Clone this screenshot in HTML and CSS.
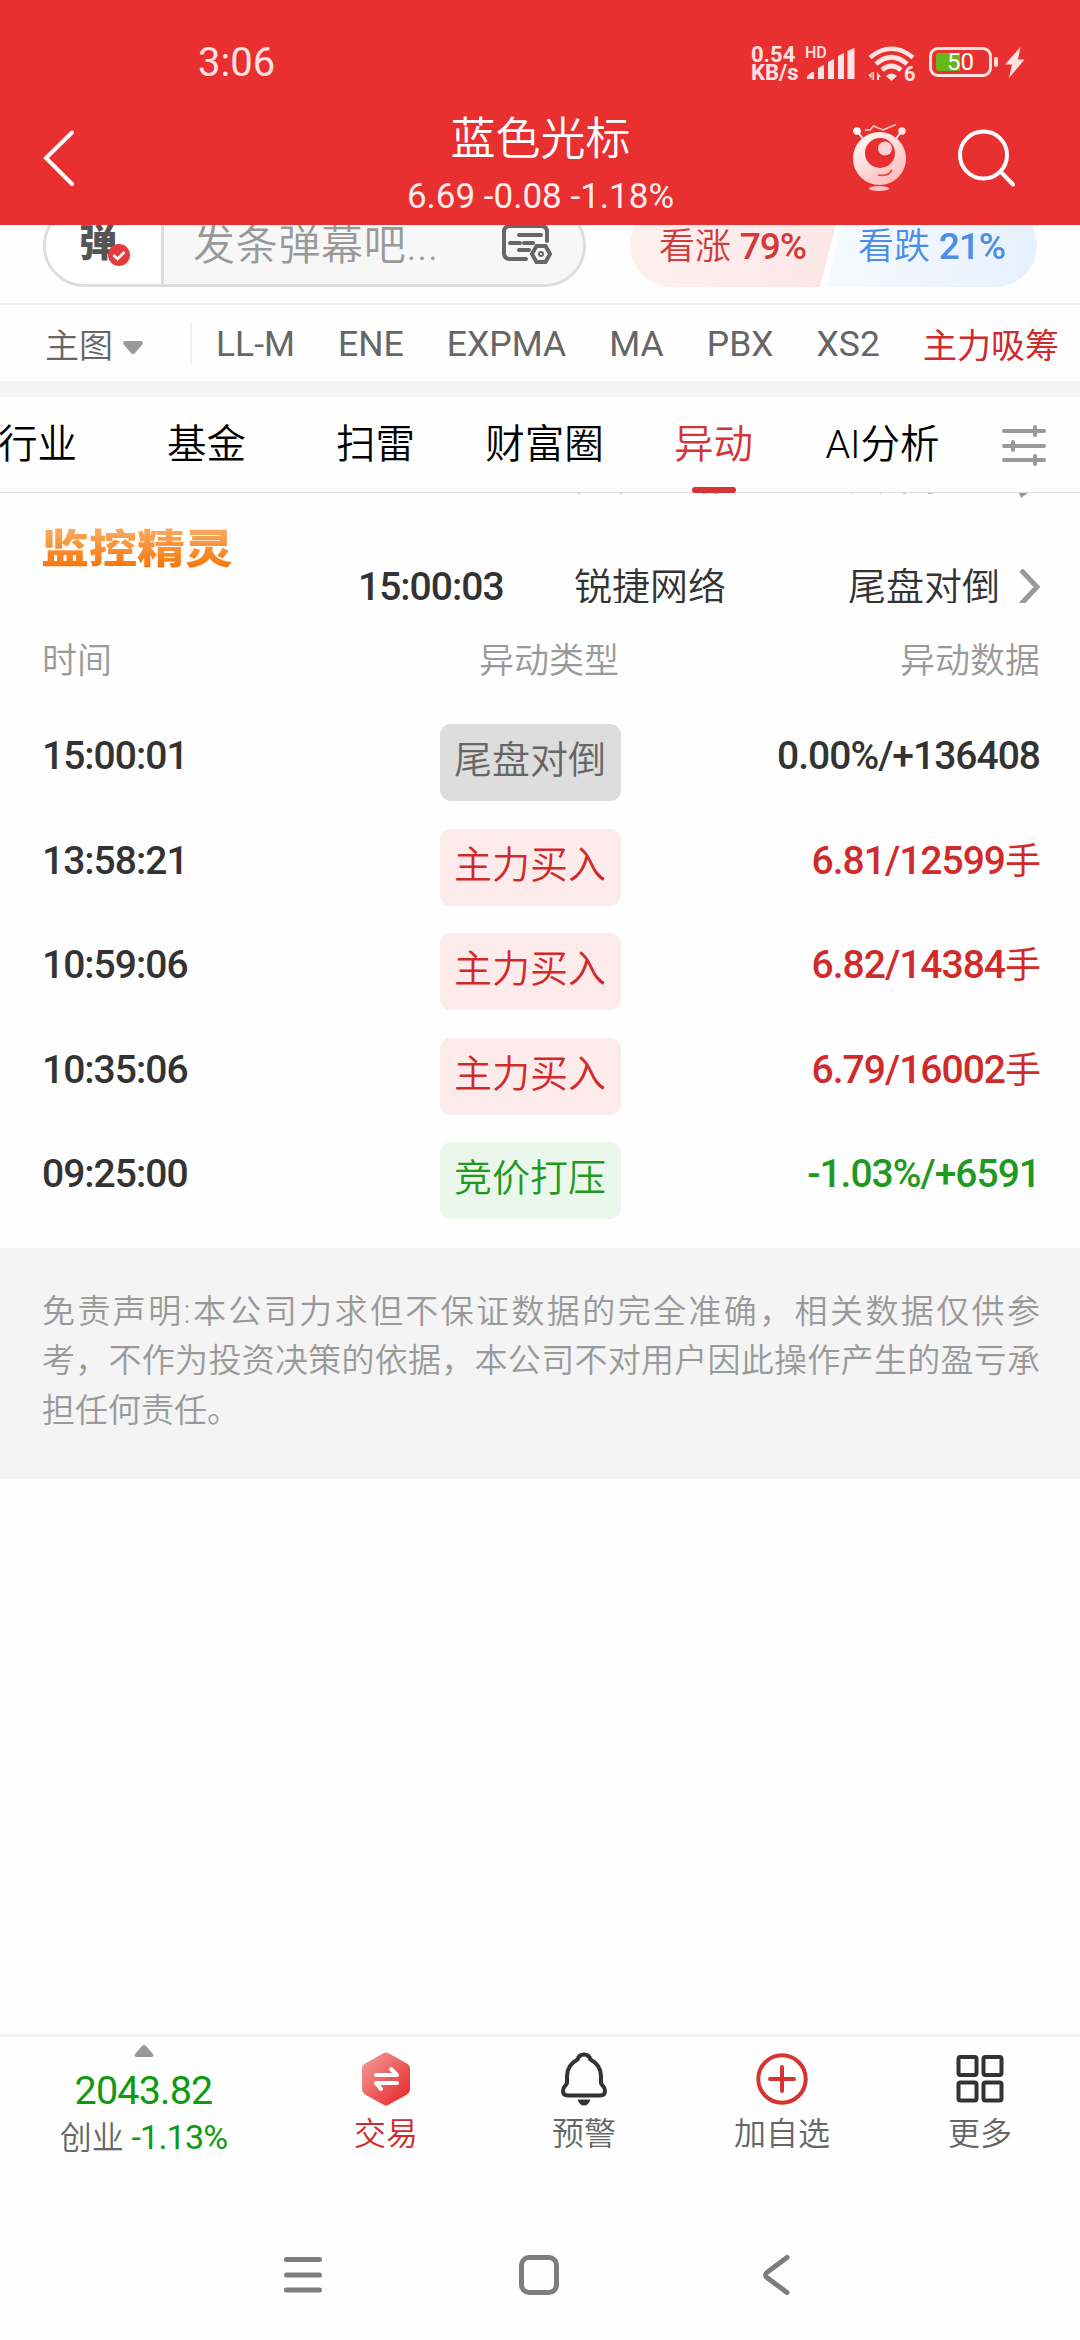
FILE: index.html
```html
<!DOCTYPE html>
<html lang="zh-CN">
<head>
    <meta charset="UTF-8">
    <meta name="viewport" content="width=device-width, initial-scale=1.0">
    <title>蓝色光标 - 异动</title>
    <link rel="stylesheet" href="styles.css">
</head>
<body>

    <header>
        <div class="status">
            <span class="clock">3:06</span>
            <div class="status-right">
                <div class="speed"><span>0.54</span><span>KB/s</span></div>
                <span class="hd">HD</span>
                <svg class="signal" width="48" height="32" viewBox="0 0 48 32">
                    <path d="M0 31v-3l5-4h2v7zM11 31V20l6-3v14zM21 31V14l6-3v20zM31 31V8l6-3v26zM40.500 31V3l7-3v31z"/>
                </svg>
                <svg class="wifi" width="48" height="36" viewBox="0 0 48 36">
                    <g fill="none" stroke="#ffe3e3" stroke-width="4.600">
                        <path d="M2 11.500Q23.500-6 45 11.500M8 18Q23.500 4.500 39 18M14 24Q23.500 16 33 24"/>
                    </g>
                    <path d="M18 30q5.500-5 11 0l-5.500 5zM4.500 26v8l-4-5zM6 34v-8h-2.500v8zM9 34v-8l4 5h-2v3z"/>
                    <text x="36" y="35">6</text>
                </svg>
                <div class="battery">
                    <div class="level"></div>
                    <span>50</span>
                </div>
                <svg class="bolt" width="20" height="31" viewBox="0 0 20 31"><path d="M15.500 0L0 17.500h7L4 31 19.500 12.500h-6.500z"/></svg>
            </div>
        </div>
        <div class="bar">
            <svg class="back" width="40" height="60" viewBox="0 0 40 60"><path d="M32 4.500L6 30l26 26"/></svg>
            <div class="stock">
                <h1>蓝色光标</h1>
                <p>6.69 -0.08 -1.18%</p>
            </div>
            <svg class="robot" width="60" height="72" viewBox="850 122 60 72">
                <defs>
                    <linearGradient id="face" x1="0" y1="0" x2=".7" y2="1">
                        <stop offset="0" stop-color="#fff"/>
                        <stop offset="1" stop-color="#ffbcbc"/>
                    </linearGradient>
                </defs>
                <path d="M857 131l7 9M902 131l-7 9" stroke="#ffe9e9" stroke-width="2"/>
                <circle cx="857" cy="131" r="3.800" fill="#fff"/>
                <circle cx="902" cy="131" r="3.800" fill="#ffe2e2"/>
                <path d="M865 130h5l3.500-4 9.500 4 13-5.500" fill="none" stroke="#ffc9c9" stroke-width="1.500"/>
                <circle cx="879.500" cy="158.500" r="26.500" fill="url(#face)"/>
                <circle cx="880" cy="153" r="15" fill="#e72f2f"/>
                <circle cx="885" cy="148.500" r="7" fill="#ffd3d3"/>
                <path d="M878 175q10 2 14-5" fill="none" stroke="#e54848" stroke-width="1.700"/>
                <ellipse cx="879" cy="188.500" rx="10" ry="2.400" fill="#ffc2c2"/>
            </svg>
            <svg class="search" width="60" height="60" viewBox="0 0 60 60"><circle cx="26.500" cy="27" r="23.500"/><path d="M44 44l12 12.500"/></svg>
        </div>
    </header>

    <section class="danmu">
        <div class="danmu-input">
            <div class="danmu-switch">
                弹
                <svg width="22" height="22" viewBox="0 0 22 22"><circle cx="11" cy="11" r="11" fill="#e43c3c"/><path d="M5.500 11l4 4 7-7" fill="none" stroke="#fff" stroke-width="2.600"/></svg>
            </div>
            <span class="placeholder">发条弹幕吧...</span>
            <svg class="setting" width="50" height="42" viewBox="0 0 50 42">
                <path d="M24 35H8q-6 0-6-6V8q0-6 6-6h31q6 0 6 6v9M17 11h22M8 19h10M22 19h9M17 26h10M30 30l4.500-8h9l4.500 8-4.500 8h-9z"/>
                <circle cx="39" cy="30" r="1"/>
            </svg>
        </div>
        <div class="vote">
            <div class="up">看涨 <b>79%</b></div>
            <div class="down">看跌 <b>21%</b></div>
        </div>
    </section>

    <section class="indicators">
        <div class="main-chart">主图<svg width="20" height="13" viewBox="0 0 20 13"><path d="M2 0h16q3 1 1 4l-7 8q-2 2-4 0L1 4Q-1 1 2 0z"/></svg></div>
        <ul>
            <li>LL-M</li>
            <li>ENE</li>
            <li>EXPMA</li>
            <li>MA</li>
            <li>PBX</li>
            <li>XS2</li>
            <li class="red">主力吸筹</li>
        </ul>
    </section>

    <nav class="tabs">
        <a>行业</a>
        <a>基金</a>
        <a>扫雷</a>
        <a>财富圈</a>
        <a class="active">异动</a>
        <a>AI分析</a>
        <svg width="44" height="42" viewBox="0 0 44 42"><path d="M2 7h40M2 22h40M2 36h40M33 3v8M11 18v8M33 32v8"/></svg>
    </nav>

    <section class="monitor">
        <h2>监控精灵</h2>
        <div class="ticker">
            <svg class="ticker-prev" width="470" height="6" viewBox="0 0 470 6">
                <path d="M8 0h2M50 0h2M132 0h5M144 0h5M281 0h1M310 0h1M333 0h3M358 0h5" stroke="#e99" stroke-width="1.500"/>
                <path d="M449 0h9l-7 5z" fill="#999"/>
            </svg>
            <div class="ticker-row">
                <span class="num">15:00:03</span>
                <span class="name">锐捷网络</span>
                <span class="type">尾盘对倒</span>
                <svg width="22" height="36" viewBox="0 0 22 36"><path d="M2 1l16 17L2 35"/></svg>
            </div>
        </div>
    </section>

    <table>
        <thead>
            <tr><th>时间</th><th>异动类型</th><th>异动数据</th></tr>
        </thead>
        <tbody>
            <tr><td>15:00:01</td><td><span class="tag gray">尾盘对倒</span></td><td>0.00%/+136408</td></tr>
            <tr><td>13:58:21</td><td><span class="tag buy">主力买入</span></td><td class="red">6.81/12599<i>手</i></td></tr>
            <tr><td>10:59:06</td><td><span class="tag buy">主力买入</span></td><td class="red">6.82/14384<i>手</i></td></tr>
            <tr><td>10:35:06</td><td><span class="tag buy">主力买入</span></td><td class="red">6.79/16002<i>手</i></td></tr>
            <tr><td>09:25:00</td><td><span class="tag sell">竞价打压</span></td><td class="green">-1.03%/+6591</td></tr>
        </tbody>
    </table>

    <div class="disclaimer">
        <p>免责声明:本公司力求但不保证数据的完全准确，相关数据仅供参</p>
        <p>考，不作为投资决策的依据，本公司不对用户因此操作产生的盈亏承</p>
        <p>担任何责任。</p>
    </div>

    <footer>
        <div class="index">
            <svg width="20" height="12" viewBox="0 0 20 12"><path d="M2 12h16q2-1 1-3l-7-8q-2-2-4 0L1 9q-1 2 1 3z"/></svg>
            <strong>2043.82</strong>
            <p>创业 <span>-1.13%</span></p>
        </div>
        <div class="item trade">
            <svg width="54" height="56" viewBox="0 0 54 56">
                <defs>
                    <linearGradient id="hex" x1="0" y1="0" x2="1" y2="1">
                        <stop offset="0" stop-color="#f5a0a0"/>
                        <stop offset="1" stop-color="#e42020"/>
                    </linearGradient>
                </defs>
                <path d="M24 2.500q3-2 6 0l18 10q3 2 3 5v21q0 3-3 5l-18 10q-3 2-6 0l-18-10q-3-2-3-5v-21q0-3 3-5z" fill="url(#hex)"/>
                <path d="M17 24h21l-6-6M38 32H17l5 6" fill="none" stroke="#fff" stroke-width="4" stroke-linecap="round" stroke-linejoin="round"/>
            </svg>
            <span>交易</span>
        </div>
        <div class="item">
            <svg width="54" height="56" viewBox="0 0 54 56">
                <path d="M27 3.500c-3 0-5.500 2-6.500 5C14 12 10 18 10 25v7c0 2-4 3-4 8 0 3 2 4.500 5 4.500h32c3 0 5-1.500 5-4.500 0-5-4-6-4-8v-7c0-7-4-13-10.500-16.500-1-3-3.500-5-6.500-5z" fill="none" stroke="#333" stroke-width="4"/>
                <path d="M20.500 48.500h13q-2 6-6.500 6t-6.500-6z" fill="#333"/>
            </svg>
            <span>预警</span>
        </div>
        <div class="item">
            <svg width="54" height="56" viewBox="0 0 54 56"><path d="M27 16v24M15 28h24" stroke-linecap="round" stroke="#d63333" stroke-width="4"/><circle cx="27" cy="28" r="23.700" fill="none" stroke="#d63333" stroke-width="4"/></svg>
            <span>加自选</span>
        </div>
        <div class="item">
            <svg width="54" height="56" viewBox="0 0 54 56" fill="none" stroke="#333" stroke-width="4">
                <rect x="5.500" y="6" width="18" height="18" rx="2"/>
                <rect x="30.500" y="6" width="18" height="18" rx="2"/>
                <rect x="5.500" y="31.500" width="18" height="18" rx="2"/>
                <rect x="30.500" y="31.500" width="18" height="18" rx="2"/>
            </svg>
            <span>更多</span>
        </div>
    </footer>

    <div class="system-nav">
        <svg width="44" height="44" viewBox="0 0 44 44"><path d="M5.500 6.500h33M5.500 22h33M5.500 37h33"/></svg>
        <svg width="44" height="44" viewBox="0 0 44 44"><rect x="4.500" y="4.500" width="35" height="35" rx="7.500"/></svg>
        <svg width="44" height="44" viewBox="0 0 44 44"><path d="M34 4.500L14.500 19q-4 3 0 6L34 39.500"/></svg>
    </div>

</body>
</html>
```

FILE: styles.css
```css
* {
    box-sizing: border-box;
}
body {
    margin: 0;
    width: 1080px;
    height: 2340px;
    overflow: hidden;
    display: flex;
    flex-direction: column;
    font-family: Roboto, "Noto Sans CJK SC", sans-serif;
    font-weight: 350;
    background-color: #fefefe;
    color: #333;
}
h1, h2, p, ul {
    margin: 0;
    padding: 0;
    font-weight: 400;
}
svg {
    display: block;
    flex: none;
}
.red {
    color: #d02a2a;
}
.green {
    color: #1f991f;
}

/* header */
header {
    height: 225px;
    flex: none;
    background-color: #e83030;
    color: #fff;
    position: relative;
    z-index: 1;
}
.status {
    display: flex;
    justify-content: space-between;
    height: 100px;
    padding: 40px 55px 0 198px;
    color: #ffe3e3;
    fill: #ffe3e3;
}
.clock {
    font-size: 40px;
    line-height: 46px;
    font-weight: 400;
}
.status-right {
    display: flex;
    align-items: flex-start;
    padding-top: 6px;
}
.speed {
    display: flex;
    flex-direction: column;
    width: 54px;
    font-size: 22px;
    line-height: 18px;
    font-weight: 700;
}
.hd {
    width: 26px;
    margin-right: -24px;
    font-size: 16px;
    line-height: 14px;
    font-weight: 500;
}
.signal {
    margin-top: 2px;
}
.wifi {
    margin-left: 13px;
}
.wifi text {
    font-size: 20px;
    font-weight: 700;
}
.battery {
    width: 63px;
    height: 30px;
    margin: 1px 0 0 13px;
    border: 3px solid #ffe3e3;
    border-radius: 9px;
    position: relative;
    text-align: center;
}
.battery span {
    position: relative;
    display: block;
    font-size: 24px;
    line-height: 25px;
    font-weight: 400;
    color: #fff;
}
.battery::after {
    content: "";
    position: absolute;
    right: -9px;
    top: 7px;
    width: 4px;
    height: 10px;
    border-radius: 2px;
    background-color: #ffe3e3;
}
.level {
    position: absolute;
    left: 4px;
    top: 3px;
    width: 24px;
    height: 18px;
    border-radius: 3px 0 0 3px;
    background-color: #65b81a;
}
.bolt {
    margin: 1px 0 0 13px;
}
.bar {
    display: flex;
    align-items: center;
    height: 125px;
    padding: 0 63px 10px 40px;
}
.back, .search {
    fill: none;
    stroke: #fff;
    stroke-width: 4;
    stroke-linecap: round;
}
.stock {
    flex: 1;
    padding: 18px 0 0 151px;
    text-align: center;
}
.stock h1 {
    font-size: 45px;
    line-height: 56px;
    font-weight: 350;
}
.stock p {
    font-size: 35px;
    line-height: 48px;
    margin-top: 5px;
    white-space: nowrap;
    color: #ffeded;
}
.robot {
    margin-right: 47px;
}

/* danmu bar, scrolled under the header */
.danmu {
    display: flex;
    flex: none;
    height: 101px;
    margin-top: -21px;
    padding-left: 43px;
    border-bottom: 2px solid #f0f0f0;
}
.danmu-input {
    display: flex;
    width: 543px;
    height: 83px;
    border: 3px solid #ddd;
    border-radius: 42px;
    background-color: #f7f7f7;
    overflow: hidden;
}
.danmu-switch {
    width: 118px;
    border-right: 3px solid #ddd;
    background-color: #fff;
    position: relative;
    padding-left: 33px;
    font-size: 38px;
    line-height: 72px;
    font-weight: 900;
    color: #555;
}
.danmu-switch svg {
    position: absolute;
    left: 62px;
    top: 37px;
}
.placeholder {
    padding-left: 29px;
    font-size: 42px;
    line-height: 77px;
    letter-spacing: .7px;
    color: #999;
}
.setting {
    margin: 17px 31px 0 auto;
    fill: none;
    stroke: #666;
    stroke-width: 4;
    stroke-linecap: round;
}
.vote {
    display: flex;
    margin-left: 44px;
    height: 83px;
    font-size: 36px;
    line-height: 86px;
}
.vote b {
    font-size: 37px;
    font-weight: 500;
    letter-spacing: -1px;
}
.up {
    width: 211px;
    padding-left: 29px;
    border-radius: 42px 0 0 42px;
    background: linear-gradient(90deg, #fff0f0, #fce6e6);
    clip-path: polygon(0 0, 100% 0, 190px 100%, 0 100%);
    color: #d03b3b;
}
.down {
    width: 211px;
    margin-left: -15px;
    padding-left: 32px;
    border-radius: 0 42px 42px 0;
    background: linear-gradient(90deg, #f6faff, #e7f0fe);
    clip-path: polygon(21px 0, 100% 0, 100% 100%, 0 100%);
    color: #4a8ee6;
}

/* chart indicators */
.indicators {
    display: flex;
    align-items: center;
    flex: none;
    height: 92px;
    border-bottom: 16px solid #f4f4f4;
    font-size: 34px;
    color: #666;
}
.main-chart {
    display: flex;
    align-items: center;
    width: 192px;
    height: 41px;
    padding-left: 45px;
    border-right: 2px solid #f0f0f0;
}
.main-chart svg {
    margin: 8px 0 0 10px;
    fill: #999;
}
.indicators ul {
    display: flex;
    flex: 1;
    justify-content: space-between;
    align-items: center;
    padding: 0 21px 0 24px;
    list-style-type: none;
}
.indicators li {
    padding-top: 2px;
    font-size: 35.5px;
}
.indicators li.red {
    padding-top: 0;
    font-size: 34px;
}

/* tabs */
.tabs {
    display: flex;
    align-items: center;
    flex: none;
    height: 96px;
    padding-right: 35px;
    border-bottom: 1px solid #ddd;
    font-size: 39.5px;
    color: #000;
}
.tabs a {
    flex: none;
    width: 169px;
    line-height: 96px;
    text-align: center;
    white-space: nowrap;
    position: relative;
}
.tabs a:first-child {
    margin-left: -47px;
}
.tabs .active {
    color: #d63333;
}
.tabs .active::after {
    content: "";
    position: absolute;
    left: 63px;
    bottom: 0;
    width: 44px;
    height: 6px;
    border-radius: 3px;
    background-color: #d63333;
}
.tabs svg {
    margin-left: 35px;
    fill: none;
    stroke: #999;
    stroke-width: 4;
    stroke-linecap: round;
}

/* monitor */
.monitor {
    display: flex;
    flex: none;
    height: 110px;
    overflow: hidden;
}
.monitor h2 {
    width: 317px;
    height: 60px;
    padding-left: 41px;
    margin-top: 27px;
    font-size: 48px;
    line-height: 60px;
    font-weight: 900;
    background: linear-gradient(#f9a65a 15%, #f77508 85%);
    -webkit-background-clip: text;
    background-clip: text;
    color: transparent;
    transform: scaleY(.84);
}
.ticker {
    flex: 1;
    padding-left: 41px;
}
.ticker-prev {
    margin-left: 212px;
}
.ticker-row {
    display: flex;
    align-items: center;
    margin-top: 58px;
    height: 60px;
    font-size: 38px;
    line-height: 46px;
    color: #333;
}
.ticker-row .num {
    width: 216px;
}
.ticker-row .name {
    width: 274px;
}
.ticker-row .type {
    width: 171px;
}
.ticker-row svg {
    fill: none;
    stroke: #999;
    stroke-width: 5;
}
.num, td {
    font-size: 39px;
    font-weight: 500;
    letter-spacing: -1px;
}

/* table */
table {
    flex: none;
    height: 625px;
    margin-bottom: 19px;
    border-collapse: collapse;
    table-layout: fixed;
    width: 1080px;
}
th, td {
    padding: 0;
    height: 104.5px;
    text-align: center;
    vertical-align: top;
    line-height: 60px;
}
th {
    height: 103px;
    padding-top: 29px;
    font-size: 35px;
    font-weight: 350;
    color: #999;
}
td {
    padding-top: 20px;
}
td i {
    font-style: normal;
    font-size: 36px;
    font-weight: 400;
}
th:first-child, td:first-child {
    width: 400px;
    padding-left: 42px;
    text-align: left;
}
th:nth-child(2) {
    width: 298px;
}
td:nth-child(2) {
    padding: 18px 38px 0 0;
}
th:last-child, td:last-child {
    padding-right: 40px;
    text-align: right;
}
.tag {
    display: inline-block;
    width: 181px;
    height: 77px;
    border-radius: 11px;
    font-size: 38px;
    line-height: 73px;
    font-weight: 350;
    letter-spacing: 0;
}
.gray {
    background-color: #ddd;
    color: #666;
}
.buy {
    background-color: #fdeaea;
    color: #d02a2a;
}
.sell {
    background-color: #ebf7eb;
    color: #1f991f;
}

.disclaimer {
    flex: none;
    height: 231px;
    padding: 39px 40px 0 42px;
    background-color: #f4f4f4;
    font-size: 33px;
    line-height: 49.5px;
    color: #999;
}
.disclaimer p {
    font-weight: 350;
    text-align: justify;
    text-align-last: justify;
    white-space: nowrap;
}
.disclaimer p:last-child {
    text-align-last: left;
}

/* bottom bar */
footer {
    display: flex;
    flex: none;
    height: 166px;
    margin-top: auto;
    border-top: 3px solid #f4f4f4;
    text-align: center;
    font-size: 32px;
    color: #666;
}
.index {
    width: 287px;
    padding-top: 8px;
}
.index svg {
    margin: 0 auto;
    fill: #999;
}
.index strong {
    display: block;
    margin-top: 11px;
    font-size: 39.5px;
    line-height: 46px;
    letter-spacing: -.8px;
    font-weight: 400;
    color: #0f9a0f;
}
.index p {
    line-height: 46px;
    font-weight: 350;
}
.index p span {
    font-size: 34px;
    letter-spacing: -.8px;
    font-weight: 400;
    color: #0f9a0f;
}
.item {
    width: 198px;
    padding-top: 14px;
    display: flex;
    flex-direction: column;
    align-items: center;
}
.item span {
    line-height: 46px;
    margin-top: 4px;
}
.trade span {
    color: #d02a2a;
}

.system-nav {
    display: flex;
    flex: none;
    justify-content: space-between;
    align-items: center;
    height: 140px;
    padding: 10px 283px 0 281px;
}
.system-nav svg {
    fill: none;
    stroke: #7d7d7d;
    stroke-width: 5;
    stroke-linecap: round;
}
```
